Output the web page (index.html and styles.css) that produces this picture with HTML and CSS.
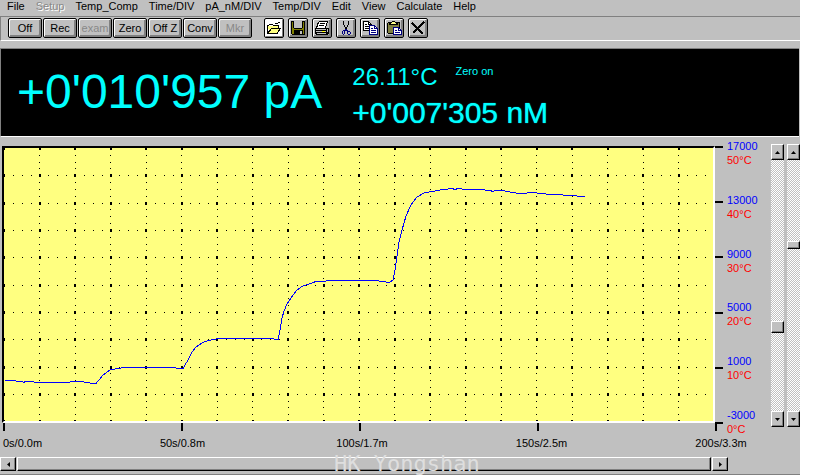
FILE: index.html
```html
<!DOCTYPE html>
<html lang="en">
<head>
<meta charset="utf-8">
<title>Recorder</title>
<link rel="stylesheet" href="styles.css">
</head>
<body>
<div class="app">
  <nav class="menu" aria-label="Main menu">
    <button>File</button><button disabled>Setup</button><button>Temp_Comp</button><button>Time/DIV</button><button>pA_nM/DIV</button><button>Temp/DIV</button><button>Edit</button><button>View</button><button>Calculate</button><button>Help</button>
  </nav>

  <div class="toolbar">
    <div class="modes">
      <button class="key">Off</button><button class="key">Rec</button><button class="key" disabled>exam</button><button class="key">Zero</button><button class="key">Off Z</button><button class="key">Conv</button><button class="key" disabled>Mkr</button>
    </div>
    <div class="tools">
      <button class="key tool" aria-label="Open"><svg viewBox="0 0 16 16"><path fill="#fff" d="M0 0h16v16H0z"/><path fill="#ffff80" d="M2 6h10v3H2zM3 9h11l-4 5H2z"/><path fill="none" stroke="#000" d="M1.500 14V5.500H3M3 4.500H7M7 5.500H12.500V8M1 13.500H11L14.500 8.500H5.500L1.500 13.500M9 3.500h3M12 2.500h2"/></svg></button>
      <button class="key tool" aria-label="Save"><svg viewBox="0 0 16 16"><path d="M1 1h14v14H2l-1-1z"/><path fill="#808000" d="M2 2h12v12H2z"/><path fill="#c0c0c0" d="M4 1h8v7H4z"/><path d="M3 1h1v7H3zM12 1h1v7h-1zM4 8h8v1H4zM4 10h9v4H4z"/><path fill="#c0c0c0" d="M10 11h2v3h-2z"/></svg></button>
      <button class="key tool" aria-label="Print"><svg viewBox="0 0 16 16"><path fill="#fff" d="M5 1h9l-2 7H3z"/><path fill="none" stroke="#000" d="M5 1.500h8.500L11.500 8M4.500 2L2.500 8M6 3.500h5M5 5.500h5"/><path d="M1 8h13l1-1v6l-2 2H2l-1-1z"/><path fill="#c0c0c0" d="M2 9h10v1H2zM2 11h10v1H2zM3 13h9v1H3zM13 9h1v3h-1z"/><path fill="#ff0" d="M8 11h3v1H8z"/></svg></button>
      <button class="key tool" aria-label="Cut"><svg viewBox="0 0 16 16"><path fill="none" stroke="#000" d="M5.500 1v3l1 2 1 2 1 2M10.500 1v3l-1 2-1 2-1 2"/><path fill="none" stroke="#000080" d="M7.500 9v2M8.500 9v2M7 10.500H5M4.500 11v3M5 14.500h1M6.500 14v-3M9 10.500h1M9.500 11v3M10 14.500h2M12.500 14v-2M12 11.500h-2"/></svg></button>
      <button class="key tool" aria-label="Copy"><svg viewBox="0 0 16 16"><path fill="#fff" stroke="#000" d="M1.500 1.500h5l3 3v6h-8z"/><path fill="none" stroke="#000" d="M6.500 1.500v3h3M3 4.500h2M3 6.500h4M3 8.500h4"/><path fill="#fff" stroke="#000080" d="M7.500 5.500h5l3 3v6h-8z"/><path fill="none" stroke="#000080" d="M12.500 5.500v3h3M9 8.500h2M9 10.500h5M9 12.500h5"/></svg></button>
      <button class="key tool" aria-label="Paste"><svg viewBox="0 0 16 16"><path d="M2 2h12v12H2l-1-1V3z"/><path fill="#808040" d="M2 3h11v10H2z"/><path fill="#ff8" stroke="#000" d="M3.500 4.500v-1l2-1 1-1h2l1 1 2 1v1z"/><path fill="#fff" stroke="#000080" d="M7.500 7.500h5l3 3v4h-8z"/><path fill="none" stroke="#000080" d="M12.500 7.500v3h3M9 10.500h2M9 12.500h5"/></svg></button>
      <button class="key tool" aria-label="Delete"><svg viewBox="0 0 16 16"><path fill="none" stroke="#000" stroke-width="2" d="M2 3L13 14M14 2L3 13"/></svg></button>
    </div>
  </div>

  <section class="display" aria-label="Readings">
    <div class="main-value">+0'010'957 pA</div>
    <div class="side">
      <div class="temp-row"><span class="temp">26.11°C</span><span class="zero">Zero on</span></div>
      <div class="conc">+0'007'305 nM</div>
    </div>
  </section>

  <main class="recorder">
    <div class="stage">
      <div class="graph">
        <svg class="plot" viewBox="4 148 709 273" preserveAspectRatio="none" role="img" aria-label="Current over time">
          <g fill="none" stroke="#000" shape-rendering="crispEdges">
            <path stroke-dasharray="1 7.875" d="M4 175.500H713M4 203.500H713M4 230.500H713M4 257.500H713M4 285.500H713M4 312.500H713M4 339.500H713M4 367.500H713M4 394.500H713"/>
            <path stroke-dasharray="1 5.825" d="M39.500 148V421M75.500 148V421M110.500 148V421M146.500 148V421M181.500 148V421M217.500 148V421M252.500 148V421M288.500 148V421M323.500 148V421M359.500 148V421M394.500 148V421M430.500 148V421M465.500 148V421M501.500 148V421M536.500 148V421M572.500 148V421M607.500 148V421M643.500 148V421M678.500 148V421"/>
            <path stroke-width="3" stroke-dasharray="2 33.500" d="M3.200 175.500H713M3.200 203.500H713M3.200 230.500H713M3.200 257.500H713M3.200 285.500H713M3.200 312.500H713M3.200 339.500H713M3.200 367.500H713M3.200 394.500H713"/>
            <path stroke-width="2" stroke-dasharray="2 33.500" d="M3.200 149H713M3.200 421H713"/>
          </g>
          <path class="trace" d="M5 380.500H15L18 382L20 381L24 382.500L26 381H32L34 382H66L68 382.500L72 381.500L84 382L90 383L96 383.500L99 380L103 375L110 370L117 368.500L126 367.500L140 367H163L176 368L183 368.500L188 360L192 352L196 347L202 343L208 340.500L216 339L222 338.500H270L278 339.500L280 330L282 318L284 311L287 304L291 298L296 291L302 286.500L309 284L316 281.500L326 281L337 280.500H374L383 281.500L389 282.500L393 280L395 270L397 256L399 242L402 230L406 216L411 205L417 197L424 193L432 191.500L440 190L448 189L452 188.500L455 189.500L458 188.500L462 189L466 190L480 189.500L490 190.500L493 191.500L495 190.500H503L510 192L516 193H527L530 192.500L537 193L550 194.500L575 195.500L580 197L585 196.500"/>
        </svg>
        <div class="x-ticks"><i></i><i></i><i></i><i></i><i></i></div>
        <ol class="x-labels"><li>0s/0.0m</li><li>50s/0.8m</li><li>100s/1.7m</li><li>150s/2.5m</li><li>200s/3.3m</li></ol>
      </div>
      <div class="y-ticks"><i></i><i></i><i></i><i></i><i></i><i></i></div>
      <ol class="y-labels">
        <li>17000<span>50°C</span></li><li>13000<span>40°C</span></li><li>9000<span>30°C</span></li><li>5000<span>20°C</span></li><li>1000<span>10°C</span></li><li>-3000<span>0°C</span></li>
      </ol>
      <div class="vscroll">
        <button aria-label="Raise range"><svg viewBox="0 0 5 3"><path d="M2.500 0L5 3H0z"/></svg></button>
        <input class="range-thumb" type="range" min="0" max="1000" value="675" aria-label="Range">
        <button aria-label="Lower range"><svg viewBox="0 0 5 3"><path d="M0 0h5L2.500 3z"/></svg></button>
      </div>
      <div class="vscroll">
        <button aria-label="Raise offset"><svg viewBox="0 0 5 3"><path d="M2.500 0L5 3H0z"/></svg></button>
        <input class="offset-thumb" type="range" min="0" max="1000" value="332" aria-label="Offset">
        <button aria-label="Lower offset"><svg viewBox="0 0 5 3"><path d="M0 0h5L2.500 3z"/></svg></button>
      </div>
    </div>
    <div class="hscroll">
      <button aria-label="Earlier"><svg class="side-arrow" viewBox="0 0 3 5"><path d="M3 0v5L0 2.500z"/></svg></button>
      <input type="range" aria-label="Time position">
      <button aria-label="Later"><svg class="side-arrow" viewBox="0 0 3 5"><path d="M0 0v5L3 2.500z"/></svg></button>
    </div>
    <div class="watermark">HK Yongshan</div>
  </main>
</div>
</body>
</html>
```
FILE: styles.css
```css
* { box-sizing: border-box; }

body {
  margin: 0;
  background: #fff;
  color: #000;
  font: 11px/14px "Liberation Sans", Arial, sans-serif;
}

button {
  margin: 0;
  padding: 0;
  border: 0;
  background: #c0c0c0;
  color: inherit;
  font: inherit;
}

ol { margin: 0; padding: 0; list-style: none; }

.app {
  display: flex;
  flex-direction: column;
  min-height: 100vh;
  margin-right: 13px;
  background: #c0c0c0;
  border-bottom: 1px solid #808080;
}

.menu {
  display: flex;
  gap: 11px;
  height: 16px;
  padding-left: 7px;
  line-height: 13px;
}
.menu button { height: 13px; }
button:disabled { color: #888; }
.menu button:disabled { text-shadow: 1px 1px #fff; }

.toolbar {
  display: flex;
  gap: 12px;
  height: 25px;
  padding: 1px 7px;
  border: solid #808080;
  border-width: 1px 0 0 1px;
  border-bottom: 1px solid #fff;
}
.modes { display: flex; gap: 1px; }
.tools { display: flex; gap: 4px; }

.key {
  width: 34px;
  height: 20px;
  border: 1px solid #000;
  border-radius: 2px;
  box-shadow: inset 1px 1px #fff, inset -2px -2px #808080;
  white-space: nowrap;
}
.tool { width: 20px; }
.tool svg { display: block; width: 16px; height: 16px; margin: 0 auto; shape-rendering: crispEdges; }

.display {
  display: flex;
  gap: 30px;
  height: 89px;
  margin: 7px 1px 0 0;
  padding-left: 16px;
  border: solid #808080;
  border-width: 1px 0 0 1px;
  border-bottom: 1px solid #fff;
  background: #000;
  color: #0ff;
  white-space: nowrap;
}
.main-value { padding-top: 15px; font-size: 48px; line-height: 56px; }
.side { padding-top: 14px; }
.temp-row { display: flex; gap: 18px; height: 32px; }
.temp { font-size: 24px; line-height: 28px; }
.zero { line-height: 16px; }
.conc { font-size: 30px; line-height: 36px; text-shadow: 0 0 1px #0ff; }

.recorder {
  position: relative;
  display: flex;
  flex: 1;
  flex-direction: column;
  padding: 2px 0 3px;
}
.stage { display: flex; flex: 1; }

.graph {
  display: flex;
  flex: 1;
  flex-direction: column;
  min-width: 0;
  margin: 7px 0 0 2px;
}
.plot {
  flex: 1;
  width: 100%;
  min-height: 0;
  border: 2px solid;
  border-color: #000 #fff #fff #000;
  background: #ffff80;
}
.trace { fill: none; stroke: #00f; stroke-width: 1; shape-rendering: crispEdges; }

.x-ticks, .x-labels { display: flex; justify-content: space-between; }
.x-ticks { height: 8px; margin: 0 -2px 0 1px; }
.x-ticks i { width: 2px; background: #000; }
.x-labels { height: 26px; margin: 0 -6px 0 1px; padding-top: 5px; white-space: nowrap; }
.x-labels li { display: flex; justify-content: center; width: 0; }
.x-labels li:first-child { justify-content: flex-start; }

.y-ticks {
  display: flex;
  flex-direction: column;
  justify-content: space-between;
  width: 8px;
  margin: 7px 0 33px;
}
.y-ticks i { height: 2px; background: #000; }

.y-labels {
  display: flex;
  flex-direction: column;
  justify-content: space-between;
  width: 48px;
  margin-bottom: 21px;
  padding-left: 4px;
  color: #00f;
}
.y-labels span { display: block; color: #f00; }

.vscroll {
  display: flex;
  flex-direction: column;
  width: 13px;
  margin: 5px 0 30px;
  background: repeating-conic-gradient(#fff 0 25%, #c0c0c0 0 50%) 0 0 / 2px 2px;
}
.vscroll + .vscroll { margin-left: 3px; }
.vscroll button, .hscroll button {
  display: flex;
  align-items: center;
  justify-content: center;
  flex: none;
  border: 1px solid #fff;
  border-right-color: #000;
  border-bottom-color: #000;
  box-shadow: inset -1px -1px #808080;
}
.vscroll button { height: 16px; }
.vscroll svg { width: 5px; height: 3px; }

input[type="range"] {
  flex: 1;
  min-width: 0;
  min-height: 0;
  margin: 0;
  appearance: none;
  background: transparent;
}
.vscroll input { width: 13px; writing-mode: vertical-lr; }
input::-webkit-slider-thumb {
  appearance: none;
  border: 1px solid #fff;
  border-right-color: #000;
  border-bottom-color: #000;
  background: #c0c0c0;
  box-shadow: inset -1px -1px #808080;
}
.range-thumb::-webkit-slider-thumb { width: 13px; height: 12px; }
.offset-thumb::-webkit-slider-thumb { width: 13px; height: 8px; }

.hscroll { display: flex; gap: 1px; height: 14px; margin-right: 72px; }
.hscroll button { width: 16px; }
.hscroll .side-arrow { width: 3px; height: 5px; }
.hscroll input { height: 14px; }
.hscroll input::-webkit-slider-thumb { width: 100%; height: 14px; }

.watermark {
  position: absolute;
  bottom: -1px;
  left: 334px;
  color: #dedede;
  font: 22px/22px "DejaVu Sans Mono", monospace;
  pointer-events: none;
}
```
